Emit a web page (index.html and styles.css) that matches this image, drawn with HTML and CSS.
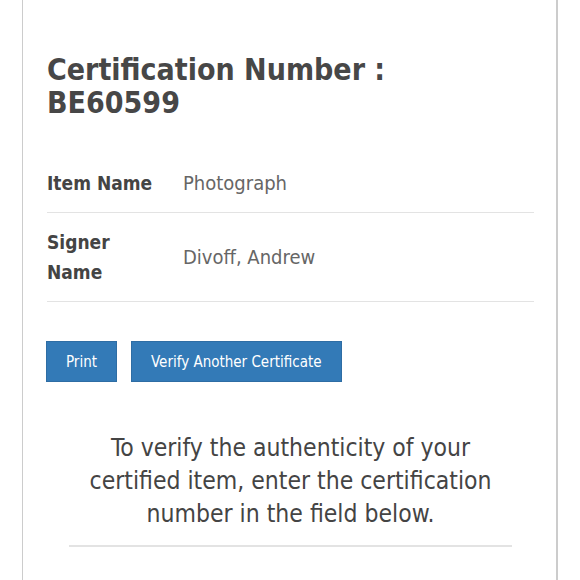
FILE: index.html
```html
<!DOCTYPE html>
<html lang="en">
<head>
<meta charset="utf-8">
<title>Certification Lookup</title>
<link rel="stylesheet" href="styles.css">
</head>
<body>
<main class="card">
  <h1 class="cert-title">Certification Number : BE60599</h1>
  <dl class="details">
    <div class="detail-row">
      <dt class="detail-label">Item Name</dt>
      <dd class="detail-value">Photograph</dd>
    </div>
    <div class="detail-row">
      <dt class="detail-label">Signer Name</dt>
      <dd class="detail-value">Divoff, Andrew</dd>
    </div>
  </dl>
  <div class="actions">
    <button class="btn" type="button">Print</button>
    <button class="btn" type="button">Verify Another Certificate</button>
  </div>
  <section class="verify">
    <p class="verify-text">To verify the authenticity of your certified item, enter the certification number in the field below.</p>
    <hr class="verify-rule">
  </section>
</main>
</body>
</html>
```
FILE: styles.css
```css
html, body {
  margin: 0;
  padding: 0;
  background: #ffffff;
}
body {
  font-family: "DejaVu Sans Condensed", "DejaVu Sans", sans-serif;
  font-stretch: condensed;
  color: #444444;
  overflow: hidden;
  height: 580px;
}
.card {
  margin-left: 22px;
  width: 536px;
  min-height: 580px;
  border-left: 1px solid #cccccc;
  border-right: 2px solid #cccccc;
  padding: 53px 22px 0 24px;
  box-sizing: border-box;
  display: flex;
  flex-direction: column;
}
.cert-title {
  margin: 0;
  font-size: 30px;
  line-height: 33px;
  font-weight: bold;
  color: #474747;
  width: 360px;
}
.details {
  margin: 35px 0 0 0;
}
.detail-row {
  display: grid;
  grid-template-columns: 120px 1fr;
  column-gap: 16px;
  align-items: center;
  padding: 14px 0;
  border-bottom: 1px solid #e3e3e3;
}
.detail-label {
  font-weight: bold;
  font-size: 19px;
  line-height: 30px;
  color: #444444;
}
.detail-value {
  margin: 0;
  font-size: 20px;
  line-height: 30px;
  color: #666666;
}
.actions {
  display: flex;
  gap: 14px;
  margin-top: 39px;
  margin-left: -1px;
}
.btn {
  font-family: inherit;
  font-stretch: condensed;
  font-size: 15px;
  height: 41px;
  padding: 0 19px;
  color: #ffffff;
  background: #337ab7;
  border: 1px solid #2e6da4;
  border-radius: 0;
}
.verify {
  margin: 49px 22px 0 22px;
  text-align: center;
}
.verify-text {
  margin: 0;
  font-size: 24.5px;
  line-height: 33px;
  color: #444444;
}
.verify-rule {
  margin: 15px 0 0 0;
  border: 0;
  border-top: 2px solid #e3e3e3;
}
```
